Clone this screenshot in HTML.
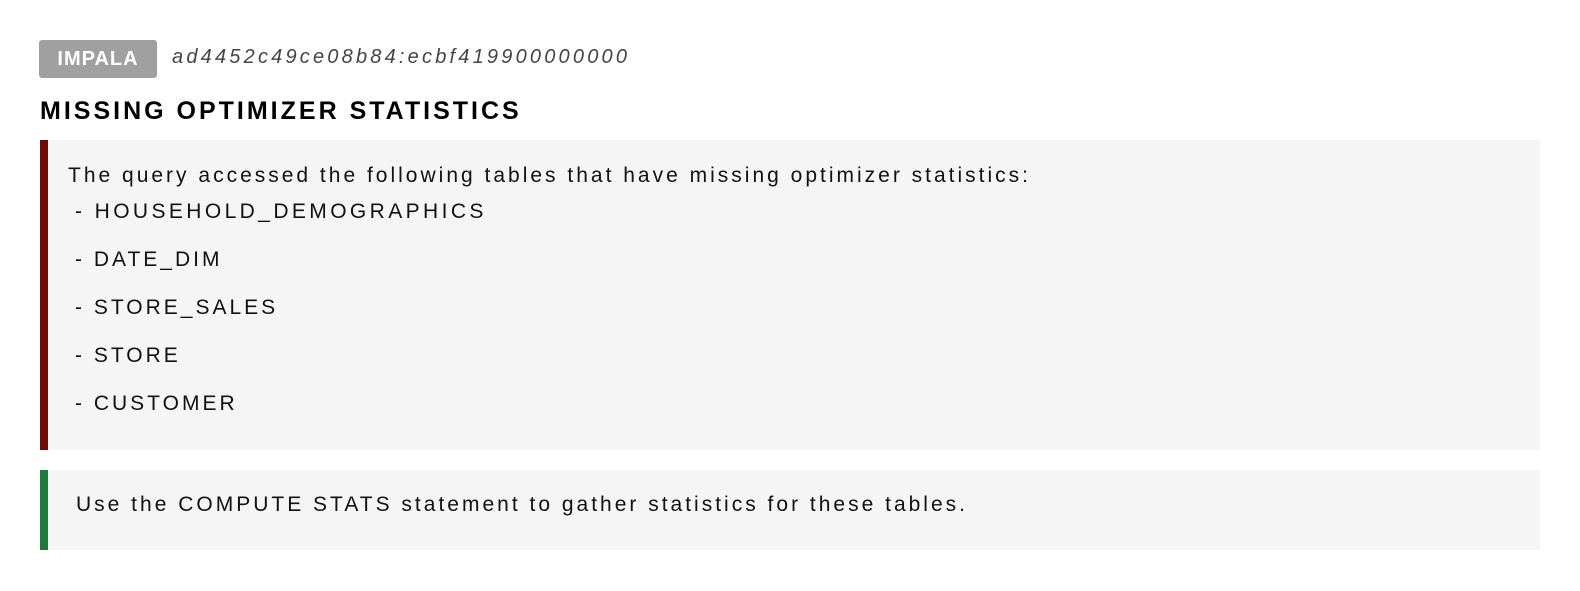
<!DOCTYPE html>
<html><head><style>
body{margin:0;background:#fff;width:1580px;height:591px;font-family:"Liberation Sans",sans-serif;color:#111;position:relative;overflow:hidden}
.badge{position:absolute;left:39px;top:40px;width:118px;height:38px;background:#a0a0a0;border-radius:3px;color:#fff;font-weight:bold;font-size:20px;letter-spacing:1px;line-height:38px;text-align:center}
.qid{position:absolute;left:172px;top:46px;font-style:italic;font-size:20px;color:#444;letter-spacing:3.2px}
h1{position:absolute;left:40px;top:97px;margin:0;font-size:25px;font-weight:bold;letter-spacing:3px;color:#000}
.box{position:absolute;left:40px;width:1492px;background:#f5f5f5;font-size:21px;letter-spacing:3px}
.b1{top:140px;height:310px;border-left:8px solid #6e0a0a}
.b2{top:470px;height:80px;border-left:8px solid #1e7a3a}
.t{position:absolute;white-space:pre}
</style></head><body>
<div class="badge">IMPALA</div>
<div class="qid">ad4452c49ce08b84:ecbf419900000000</div>
<h1>MISSING OPTIMIZER STATISTICS</h1>
<div class="box b1">
<div class="t" style="left:20px;top:24px">The query accessed the following tables that have missing optimizer statistics:</div>
<div class="t" style="left:27px;top:60px;letter-spacing:3.4px">- HOUSEHOLD_DEMOGRAPHICS</div>
<div class="t" style="left:27px;top:108px">- DATE_DIM</div>
<div class="t" style="left:27px;top:156px">- STORE_SALES</div>
<div class="t" style="left:27px;top:204px">- STORE</div>
<div class="t" style="left:27px;top:252px">- CUSTOMER</div>
</div>
<div class="box b2">
<div class="t" style="left:28px;top:23px">Use the COMPUTE STATS statement to gather statistics for these tables.</div>
</div>
</body></html>
